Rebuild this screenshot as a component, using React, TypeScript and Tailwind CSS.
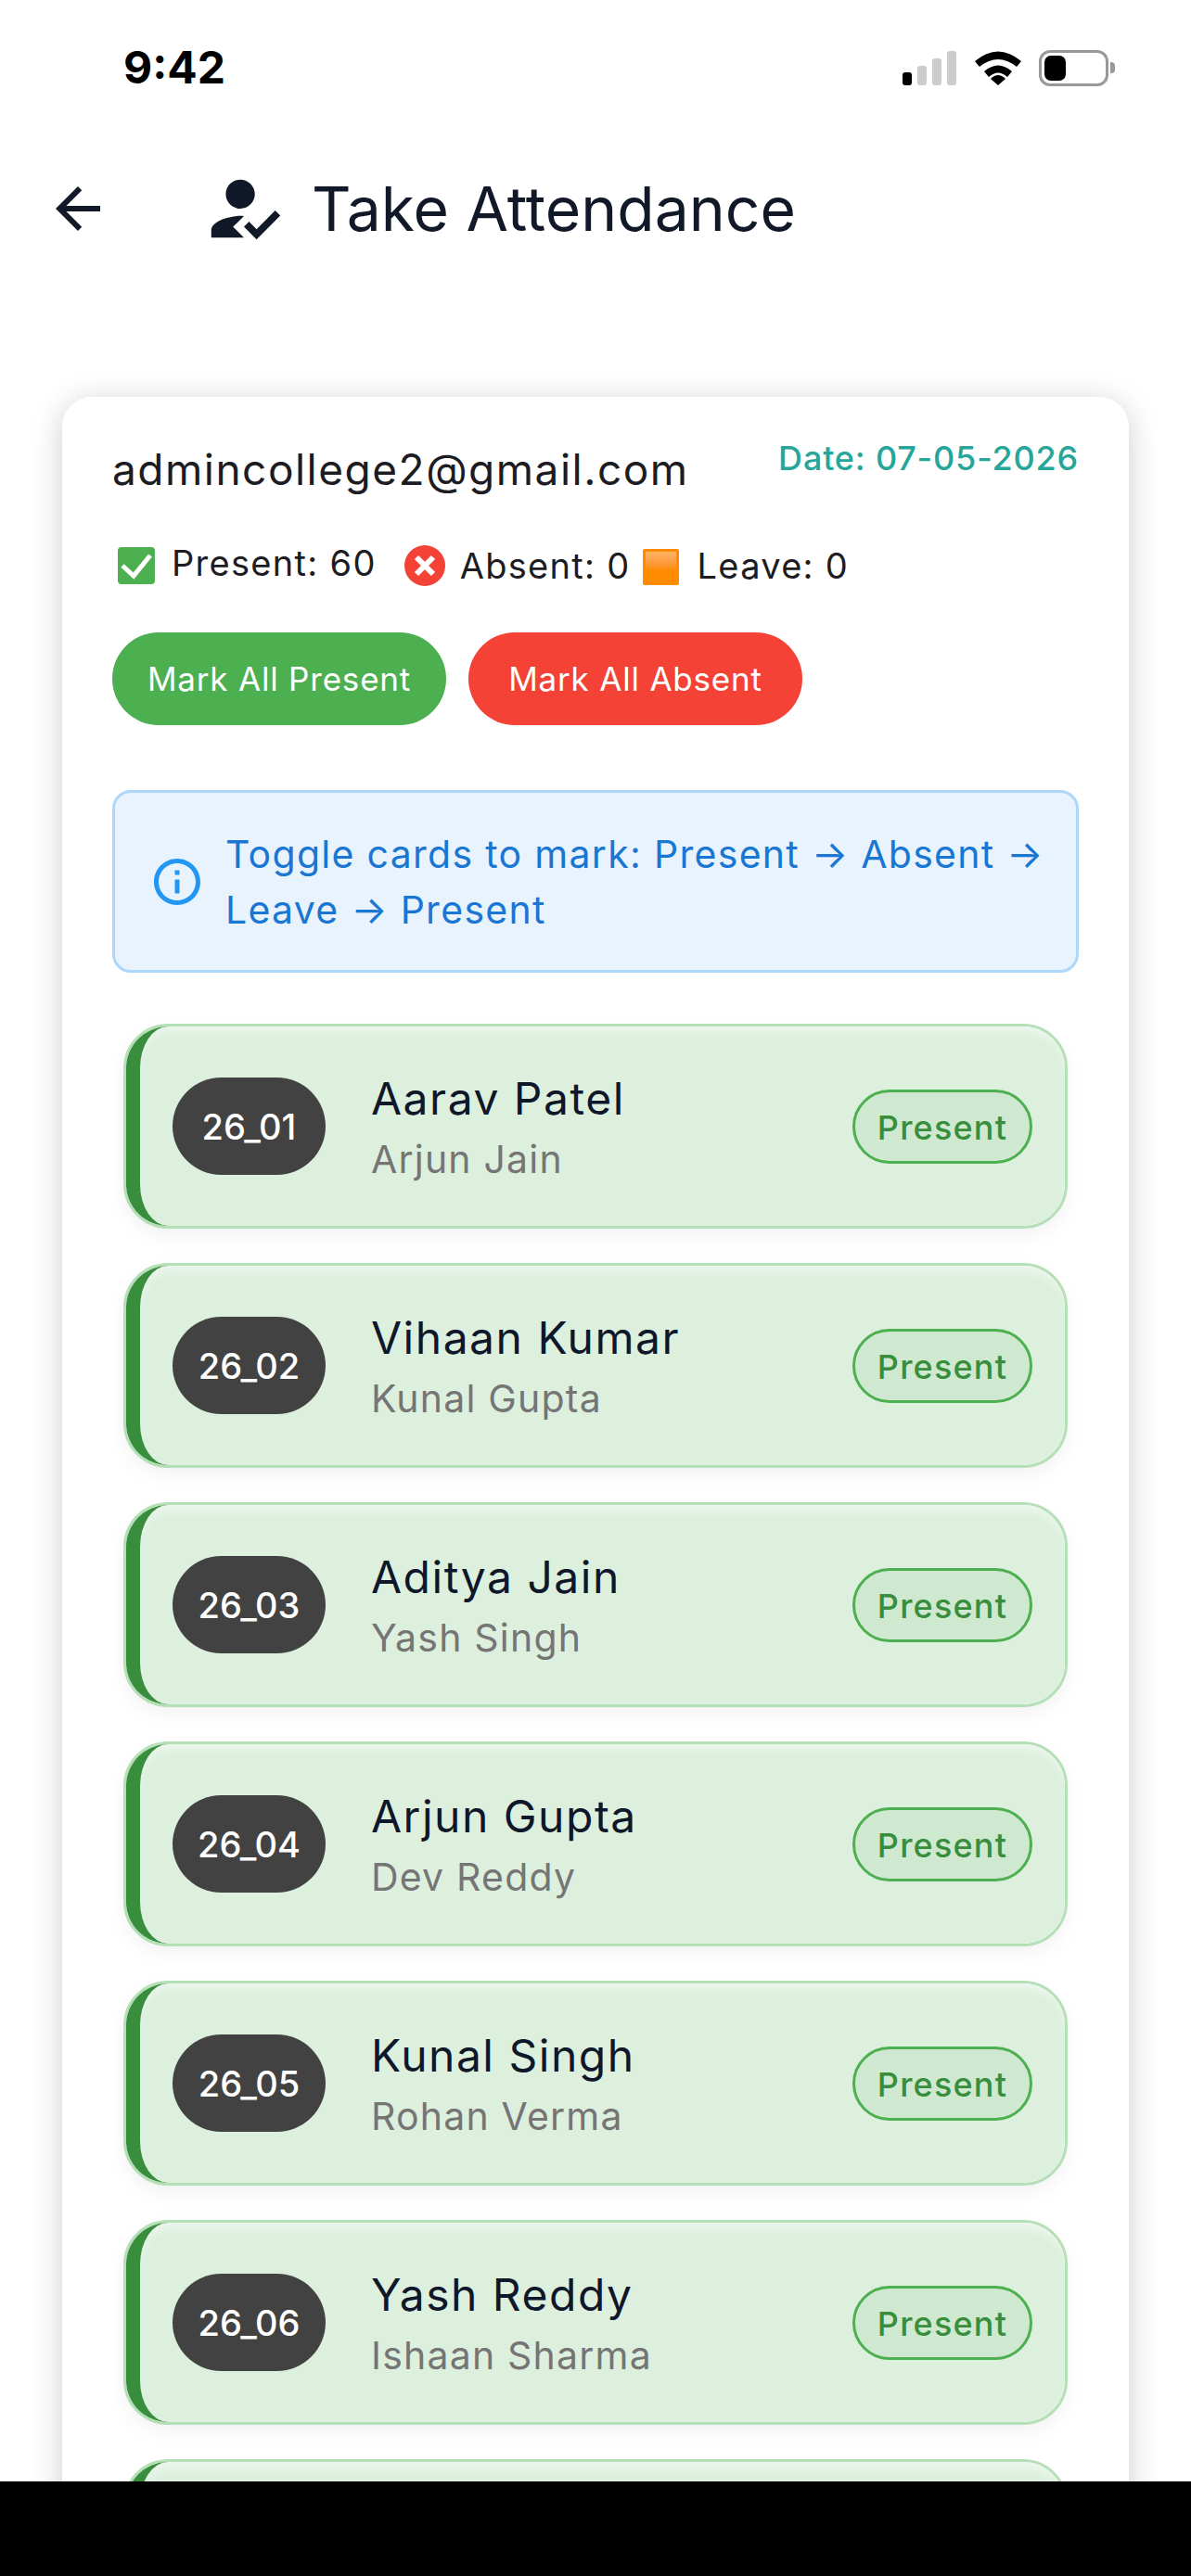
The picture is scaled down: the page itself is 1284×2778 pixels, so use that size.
const F = "font-['Inter',sans-serif]";

const students = [
  ["26_01", "Aarav Patel", "Arjun Jain"],
  ["26_02", "Vihaan Kumar", "Kunal Gupta"],
  ["26_03", "Aditya Jain", "Yash Singh"],
  ["26_04", "Arjun Gupta", "Dev Reddy"],
  ["26_05", "Kunal Singh", "Rohan Verma"],
  ["26_06", "Yash Reddy", "Ishaan Sharma"],
];

function StatusBar() {
  return (
    <div className="h-[124px] flex items-center justify-between pl-[133px] pr-[82px] pt-[22px]">
      <span className="text-[48px] leading-[60px] font-bold text-black">9:42</span>
      <div className="flex items-center">
        <div className="flex items-end gap-[6px] h-[37px]">
          <div className="w-[10px] h-[14px] rounded-[3px] bg-black" />
          <div className="w-[10px] h-[21px] rounded-[3px] bg-[#cccccc]" />
          <div className="w-[10px] h-[29px] rounded-[3px] bg-[#cccccc]" />
          <div className="w-[10px] h-[37px] rounded-[3px] bg-[#cccccc]" />
        </div>
        <svg className="ml-[20px]" width="50" height="37" viewBox="0 0 50 37">
          <path d="M0 11 Q25 -10 50 11 L45 17 Q25 1 5 17 Z" fill="#000" />
          <path d="M10 22 Q25 9 40 22 L35 28 Q25 19 15 28 Z" fill="#000" />
          <path d="M17 30 Q25 22 33 30 L25 37 Z" fill="#000" />
        </svg>
        <div className="ml-[19px] w-[75px] h-[39px] rounded-[12px] border-[3px] border-[#999999] p-[3px]">
          <div className="w-[23px] h-full rounded-[7px] bg-black" />
        </div>
        <div className="ml-[2px] w-[5px] h-[12px] rounded-r-[4px] bg-[#999999]" />
      </div>
    </div>
  );
}

function Header() {
  return (
    <div className="h-[304px] pt-[50px] pl-[48px] text-[#111827]">
      <div className="flex items-center h-[96px] pt-[5px]">
        <svg width="72" height="72" viewBox="0 0 24 24" fill="currentColor">
          <path d="M20 11H7.83l5.59-5.59L12 4l-8 8 8 8 1.41-1.41L7.83 13H20v-2z" />
        </svg>
        <svg className="ml-[96px]" width="94" height="94" viewBox="0 0 24 24" fill="currentColor">
          <path d="M9 17l3-2.94c-.39-.04-.68-.06-1-.06-2.67 0-8 1.34-8 4v2h9l-3-3zm2-5c2.21 0 4-1.79 4-4s-1.79-4-4-4-4 1.79-4 4 1.79 4 4 4" />
          <path d="M15.47 20.5L12 17l1.4-1.41 2.07 2.08 5.13-5.17 1.4 1.41z" />
        </svg>
        <h1 className="ml-[26px] text-[66px] leading-[78px] font-normal">Take Attendance</h1>
      </div>
    </div>
  );
}

function StudentRow({ roll, name, sub }: { roll: string; name: string; sub: string }) {
  return (
    <div className="h-[221px] shrink-0 rounded-[48px] border-[3px] border-[#b5dfb7] shadow-[0_8px_20px_rgba(0,0,0,0.05)]">
      <div className="h-full rounded-[45px] border-l-[15px] border-l-[#388e3c] bg-[#ddf0de] shadow-[inset_0_10px_12px_-6px_rgba(255,255,255,0.55)] flex items-center pl-[35px] pr-[35px]">
        <div className="w-[165px] h-[105px] pt-[2px] rounded-full bg-[#424242] flex items-center justify-center text-white text-[38px] font-medium">
          {roll}
        </div>
        <div className="ml-[49px] flex-1 flex flex-col gap-[10px]">
          <span className="text-[48px] leading-[60px] text-[#0f172a] tracking-[1.5px]">{name}</span>
          <span className="text-[41px] leading-[50px] text-[#757575] tracking-[1.2px]">{sub}</span>
        </div>
        <div className="w-[194px] h-[80px] pt-[2px] rounded-full border-[3px] border-[#4caf50] bg-[#cfe9d1] flex items-center justify-center text-[#388e3c] text-[36px] font-medium tracking-[1.2px]">
          Present
        </div>
      </div>
    </div>
  );
}

export default function App() {
  return (
    <div className={`${F} w-[1284px] h-[2778px] overflow-hidden bg-white flex flex-col`}>
      <div className="h-[2676px] overflow-hidden shrink-0">
        <StatusBar />
        <Header />
        <div className="mx-[67px] rounded-t-[32px] bg-white shadow-[0_6px_34px_rgba(0,0,0,0.2)] h-[2400px] px-[54px] pt-[44px]">
          <div className="flex items-start justify-between">
            <span className="mt-[5px] text-[46px] leading-[58px] text-[#1c1c22] tracking-[1.5px]">admincollege2@gmail.com</span>
            <span className="text-[36px] leading-[44px] font-medium text-[#26a69a] tracking-[0.8px]">Date: 07-05-2026</span>
          </div>
          <div className="mt-[50px] flex items-center text-[38px] leading-[46px] text-[#1c1c22] tracking-[1.3px] h-[50px]">
            <svg className="ml-[6px]" width="40" height="40" viewBox="0 0 40 40">
              <rect width="40" height="40" rx="4" fill="#4caf50" />
              <path d="M5 20l12 11L35 9" fill="none" stroke="#fff" strokeWidth="5" />
            </svg>
            <span className="ml-[18px] mb-[6px]">Present: 60</span>
            <svg className="ml-[30px]" width="44" height="44" viewBox="0 0 44 44">
              <circle cx="22" cy="22" r="22" fill="#f44336" />
              <path d="M13 13l18 18M31 13L13 31" stroke="#fff" strokeWidth="6" />
            </svg>
            <span className="ml-[16px]">Absent: 0</span>
            <div className="ml-[13px] mt-[2px] w-[39px] h-[39px] rounded-[2px] bg-[#ff8c00] p-[3px]">
              <div className="h-full bg-gradient-to-b from-[#ffb366] to-[#ff8c00] to-60%" />
            </div>
            <span className="ml-[20px]">Leave: 0</span>
          </div>
          <div className="mt-[47px] flex gap-[24px]">
            <button className="w-[360px] h-[100px] rounded-full bg-[#4caf50] text-white text-[35px] tracking-[0.8px]">Mark All Present</button>
            <button className="w-[360px] h-[100px] rounded-full bg-[#f44336] text-white text-[35px] tracking-[0.8px]">Mark All Absent</button>
          </div>
          <div className="mt-[70px] h-[197px] rounded-[20px] border-[3px] border-[#aed8fb] bg-[#e8f3fe] flex items-center pl-[37px] pr-[24px] text-[#1976d2]">
            <svg className="shrink-0" width="60" height="60" viewBox="0 0 24 24" fill="#2196f3">
              <path d="M11 7h2v2h-2zm0 4h2v6h-2zm1-9C6.48 2 2 6.48 2 12s4.48 10 10 10 10-4.48 10-10S17.52 2 12 2zm0 18c-4.41 0-8-3.59-8-8s3.59-8 8-8 8 3.59 8 8-3.59 8-8 8z" />
            </svg>
            <p className="ml-[22px] text-[41px] leading-[60px] tracking-[1.3px]">Toggle cards to mark: Present → Absent → Leave → Present</p>
          </div>
          <div className="mt-[55px] mx-[12px] flex flex-col gap-[37px]">
            {students.map(([r, n, s]) => (
              <StudentRow key={r} roll={r} name={n} sub={s} />
            ))}
            <div className="h-[221px] shrink-0 rounded-[48px] border-[3px] border-[#b5dfb7]">
              <div className="h-full rounded-[45px] border-l-[15px] border-l-[#388e3c] bg-[#ddf0de] shadow-[inset_0_10px_12px_-6px_rgba(255,255,255,0.55)]" />
            </div>
          </div>
        </div>
      </div>
      <div className="h-[102px] bg-black shrink-0" />
    </div>
  );
}
